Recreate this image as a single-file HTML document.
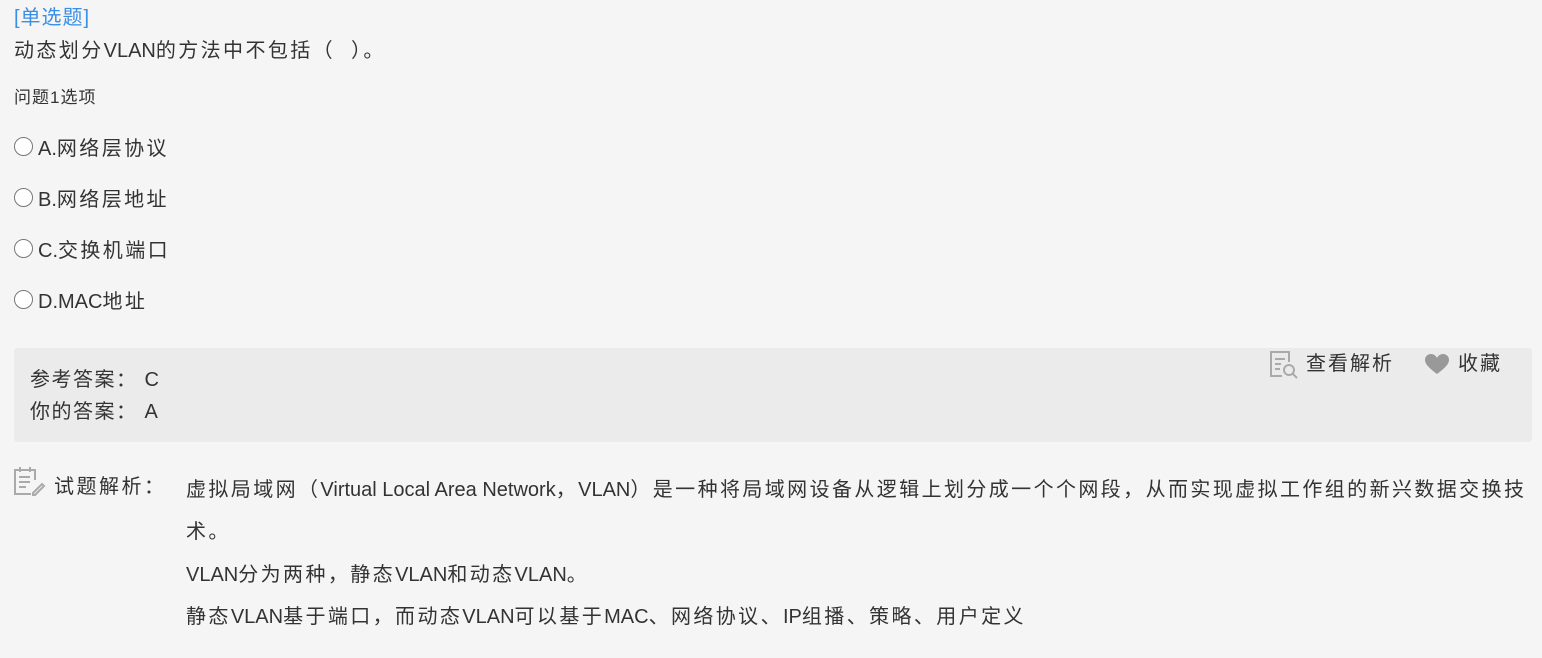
<!DOCTYPE html><html><head><meta charset="utf-8"><style>
body{margin:0;background:#f5f5f5;font-family:"Liberation Sans","Noto Sans CJK SC",sans-serif;color:#333;width:1542px;height:658px;overflow:hidden;position:relative}
.a{position:absolute;white-space:nowrap;line-height:1;letter-spacing:2.4px}
.l{letter-spacing:0}
.r{display:inline-block;width:19px;height:19px;border:1px solid #777;border-radius:50%;background:#fff;box-sizing:border-box;vertical-align:top;margin-right:5px;position:relative;top:-2px}
</style></head><body>
<div class="a" style="left:14px;top:8px;font-size:20px;color:#3a8ee6;letter-spacing:1px">[单选题]</div>
<div class="a" style="left:14px;top:41px;font-size:20px">动态划分<span class="l">VLAN</span>的方法中不包括（&nbsp;&nbsp;）。</div>
<div class="a" style="left:14px;top:89px;font-size:17px;letter-spacing:1px">问题1选项</div>
<div class="a" style="left:14px;top:139px;font-size:20px"><span class="r"></span><span class="l">A.</span>网络层协议</div>
<div class="a" style="left:14px;top:190px;font-size:20px"><span class="r"></span><span class="l">B.</span>网络层地址</div>
<div class="a" style="left:14px;top:241px;font-size:20px"><span class="r"></span><span class="l">C.</span>交换机端口</div>
<div class="a" style="left:14px;top:292px;font-size:20px"><span class="r"></span><span class="l">D.MAC</span>地址</div>
<div style="position:absolute;left:14px;top:348px;width:1518px;height:94px;background:#ebebeb;border-radius:3px"></div>
<div class="a" style="left:30px;top:370px;font-size:20px;letter-spacing:1.5px">参考答案：&nbsp;C</div>
<div class="a" style="left:30px;top:402px;font-size:20px;letter-spacing:1.5px">你的答案：&nbsp;A</div>
<svg style="position:absolute;left:1268px;top:350px" width="32" height="30" viewBox="0 0 32 30" fill="none" stroke="#aaa" stroke-width="2"><path d="M14 26H3V2h18v10"/><path d="M7 9h10M7 14h6M7 19h5"/><circle cx="21" cy="20" r="5"/><path d="M25 24l4 4"/></svg>
<div class="a" style="left:1306px;top:354px;font-size:20px;letter-spacing:2px">查看解析</div>
<svg style="position:absolute;left:1424px;top:353px" width="26" height="22" viewBox="0 0 26 22"><path d="M13 21C5 15 1 11 1 7 1 3 4 1 7 1c3 0 5 2 6 4 1-2 3-4 6-4 3 0 6 2 6 6 0 4-4 8-12 14z" fill="#999"/></svg>
<div class="a" style="left:1458px;top:354px;font-size:20px;letter-spacing:2px">收藏</div>
<svg style="position:absolute;left:13px;top:466px" width="34" height="30" viewBox="0 0 34 30" fill="none" stroke="#aaa" stroke-width="2"><path d="M18 28H2V4h20v10"/><path d="M7 1v5M17 1v5M6 11h11M6 16h11M6 21h7"/><path d="M20 27l9-9 2 2-9 9h-2z"/></svg>
<div class="a" style="left:54px;top:477px;font-size:20px;letter-spacing:2.5px">试题解析：</div>
<div class="a" style="left:186px;top:480px;font-size:20px">虚拟局域网（<span class="l">Virtual Local Area Network</span>，<span class="l">VLAN</span>）是一种将局域网设备从逻辑上划分成一个个网段，从而实现虚拟工作组的新兴数据交换技</div>
<div class="a" style="left:186px;top:522px;font-size:20px">术。</div>
<div class="a" style="left:186px;top:565px;font-size:20px"><span class="l">VLAN</span>分为两种，静态<span class="l">VLAN</span>和动态<span class="l">VLAN</span>。</div>
<div class="a" style="left:186px;top:607px;font-size:20px">静态<span class="l">VLAN</span>基于端口，而动态<span class="l">VLAN</span>可以基于<span class="l">MAC</span>、网络协议、<span class="l">IP</span>组播、策略、用户定义</div>
</body></html>
